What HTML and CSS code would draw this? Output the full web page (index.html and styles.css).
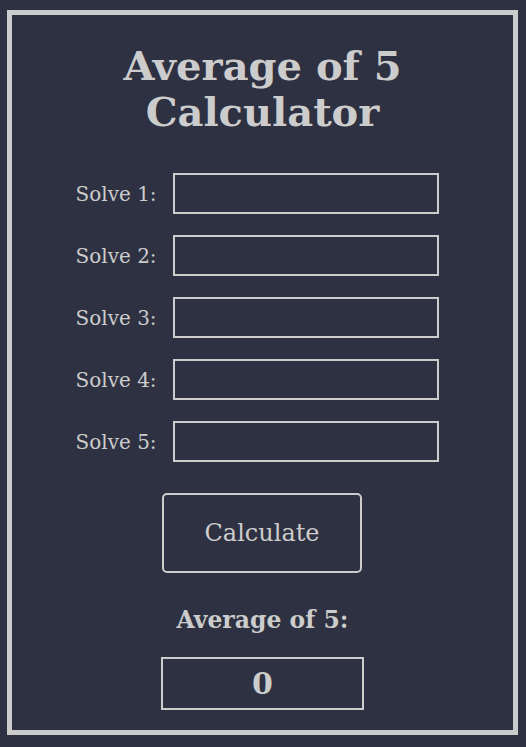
FILE: index.html
```html
<!DOCTYPE html>
<html>
<head>
<meta charset="utf-8">
<link rel="stylesheet" href="styles.css">
</head>
<body>
<main class="card">
  <h1 class="title">Average of 5<br>Calculator</h1>
  <div class="rows">
    <div class="row"><label class="label">Solve 1:</label><input class="field" type="text"></div>
    <div class="row"><label class="label">Solve 2:</label><input class="field" type="text"></div>
    <div class="row"><label class="label">Solve 3:</label><input class="field" type="text"></div>
    <div class="row"><label class="label">Solve 4:</label><input class="field" type="text"></div>
    <div class="row"><label class="label">Solve 5:</label><input class="field" type="text"></div>
  </div>
  <button class="calc">Calculate</button>
  <div class="result-label">Average of 5:</div>
  <div class="result">0</div>
</main>
</body>
</html>
```
FILE: styles.css
```css
html, body {
  margin: 0;
  padding: 0;
  background: #2e3141;
}
body {
  padding: 10px 8px 12px 7px;
  font-family: "DejaVu Serif", serif;
  color: #cccccc;
}
.card {
  box-sizing: border-box;
  width: 511px;
  height: 725px;
  border: 5px solid #cccccc;
  display: flex;
  flex-direction: column;
  align-items: center;
}
.title {
  margin: 28px 0 0;
  font-size: 40px;
  line-height: 46px;
  font-weight: bold;
  text-align: center;
}
.rows {
  margin-top: 38px;
  margin-right: 11px;
  display: flex;
  flex-direction: column;
  gap: 21px;
}
.row {
  display: flex;
  align-items: center;
}
.label {
  width: 97px;
  font-size: 20px;
  text-align: left;
}
.field {
  box-sizing: border-box;
  width: 266px;
  height: 41px;
  background: transparent;
  border: 2px solid #cccccc;
  margin: 0;
  color: #cccccc;
  font-family: inherit;
}
.calc {
  box-sizing: border-box;
  margin-top: 31px;
  margin-right: 1px;
  width: 200px;
  height: 80px;
  border: 2px solid #cccccc;
  border-radius: 5px;
  background: transparent;
  color: #cccccc;
  font-family: "DejaVu Serif", serif;
  font-size: 24px;
}
.result-label {
  margin-top: 33px;
  font-size: 23.5px;
  font-weight: bold;
}
.result {
  box-sizing: border-box;
  margin-top: 23px;
  width: 203px;
  height: 53px;
  border: 2px solid #cccccc;
  display: flex;
  align-items: center;
  justify-content: center;
  font-size: 30px;
  font-weight: bold;
}
```
